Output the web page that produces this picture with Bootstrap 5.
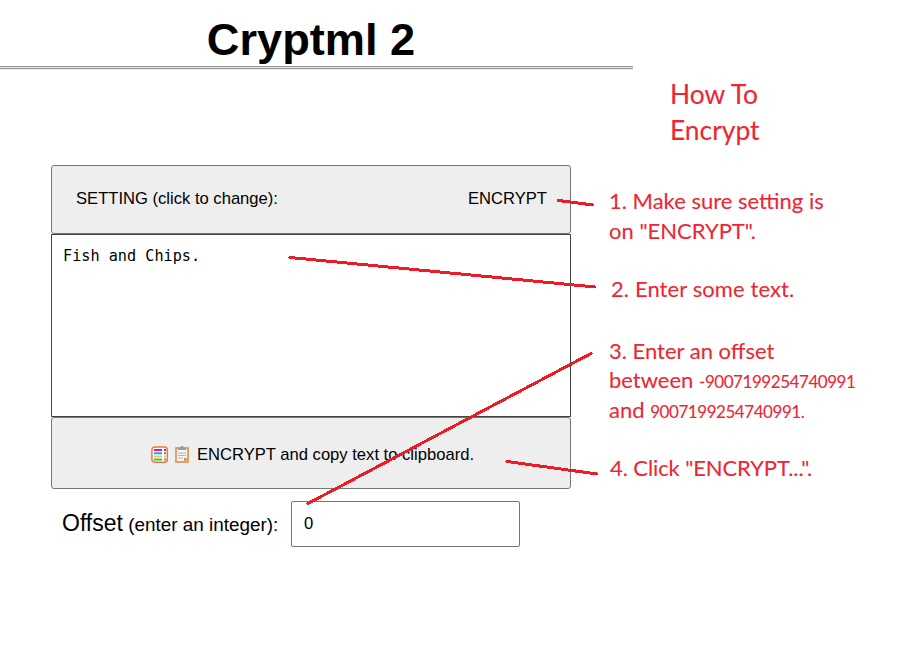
<!DOCTYPE html>
<html lang="en">
<head>
<meta charset="utf-8">
<meta name="viewport" content="width=device-width, initial-scale=1">
<title>Cryptml 2</title>
<link href="https://cdn.jsdelivr.net/npm/bootstrap@5.3.0/dist/css/bootstrap.min.css" rel="stylesheet">
<style>
body{font-family:"Liberation Sans",Arial,sans-serif;color:#000;background:#fff;width:909px;height:646px;overflow:hidden;font-size:16.6px}
.tool{width:633px}
.guide{width:276px;font-family:Lato,sans-serif;color:#ed2632;font-size:22px;line-height:29.5px;white-space:nowrap;-webkit-text-stroke:.1px #ed2632}
.title-bar{height:70px;padding:13px 11px 0 0;border-bottom:1px solid #eee}
.title-bar h1{font-size:45.2px;line-height:53px;font-weight:700;margin:0}
.title-bar .rule{height:3px;border-top:1px solid #919191;border-bottom:1px solid #919191;background:#eee;margin-right:-11px}
.panel{width:520px;margin:95px 0 0 51px}
.tool-btn{background:#eee;border:1px solid #767676;border-radius:3px;color:#000;font-size:16.6px;line-height:20px}
.setting{height:69px;padding:0 23px 1px 24px}
.message{height:183px;border:1px solid #444;border-radius:0;padding:11px;font-family:"DejaVu Sans Mono",monospace;font-size:15.2px;line-height:20px;resize:none;color:#000;overflow:hidden}
.go{height:72px;padding:4px 0 0 3px}
.palette-icon{margin-right:6px}
.offset-row{padding:12px 0 0 11px}
.offset-row label{width:229px;font-size:18.9px;white-space:nowrap;padding-bottom:2px}
.offset-row .big{font-size:23px}
.offset-row input{width:229px;height:46px;border:1px solid #767676;border-radius:2px;padding:0 12px;font-size:16.6px;color:#000}
.guide h2{font-size:26.4px;line-height:36px;font-weight:400;margin:76px 0 0 37px}
.guide ol{list-style:none;margin:0 0 0 -24px;padding:0}
.guide small{font-size:17px;line-height:1;letter-spacing:-.45px}
.step1{padding-top:38px}
.step2{padding:29px 0 0 2px;letter-spacing:.1px}
.step3{padding-top:32px}
.step4{padding:29px 0 0 1px;letter-spacing:-.1px}
.pointers{position:absolute;left:0;top:0;pointer-events:none}
</style>
<script src="https://cdn.jsdelivr.net/npm/bootstrap@5.3.0/dist/js/bootstrap.bundle.min.js"></script>
</head>
<body class="d-flex position-relative">
<main class="tool flex-shrink-0">
  <header class="title-bar text-center">
    <h1>Cryptml 2</h1>
    <div class="rule"></div>
  </header>
  <div class="panel d-flex flex-column">
    <button class="tool-btn setting d-flex justify-content-between align-items-center" type="button"><span>SETTING (click to change):</span><span>ENCRYPT</span></button>
    <textarea class="message d-block w-100" spellcheck="false">Fish and Chips.</textarea>
    <button class="tool-btn go d-flex justify-content-center align-items-center" type="button">
      <svg width="18" height="18" viewBox="0 0 18 18" class="palette-icon"><rect x=".9" y=".9" width="15.4" height="15.4" rx="3" fill="#fff" stroke="#f9733d" stroke-width="1.5"/><g stroke-width="2"><path d="M3 4h8M13 4h2" stroke="#e8168b"/><path d="M3 7.300h8M13 7.300h2" stroke="#26a0e8"/><path d="M3 10.500h8M13 10.500h2" stroke="#f5cb32"/><path d="M3 13.500h8M13 13.500h2" stroke="#21c77c"/></g></svg>
      <svg width="14" height="18" viewBox="0 0 14 18"><rect y="1" width="14" height="16" rx="1" fill="#dfa261"/><path d="M2 3h10v9l-3 3H2z" fill="#f3f3f8"/><path d="M9 15v-3h3z" fill="#c88945"/><path d="M3 3V2h2l1-2h2l1 2h2v2H3z" fill="#9c9ca5"/><path d="M3 7h8M3 9.500h8M3 12h5" stroke="#b2b2bd" stroke-width="1"/></svg>
      <span class="ms-2">ENCRYPT and copy text to clipboard.</span>
    </button>
    <div class="offset-row d-flex align-items-center">
      <label for="offset"><span class="big">Offset</span> (enter an integer):</label>
      <input id="offset" type="text" value="0">
    </div>
  </div>
</main>
<aside class="guide flex-shrink-0">
  <h2>How To<br>Encrypt</h2>
  <ol>
    <li class="step1">1. Make sure setting is<br>on "ENCRYPT".</li>
    <li class="step2">2. Enter some text.</li>
    <li class="step3">3. Enter an offset<br>between <small>-9007199254740991</small><br>and <small>9007199254740991.</small></li>
    <li class="step4">4. Click "ENCRYPT...".</li>
  </ol>
</aside>
<svg class="pointers" width="909" height="646" viewBox="0 0 909 646" fill="none" stroke="#ed1c24" stroke-width="3" stroke-linecap="round" shape-rendering="crispEdges"><path d="M558.500 200.500L593 205M290 257.500L595 287M308 503.500L591 353.500M507 461.500L597 474"/></svg>
</body>
</html>
